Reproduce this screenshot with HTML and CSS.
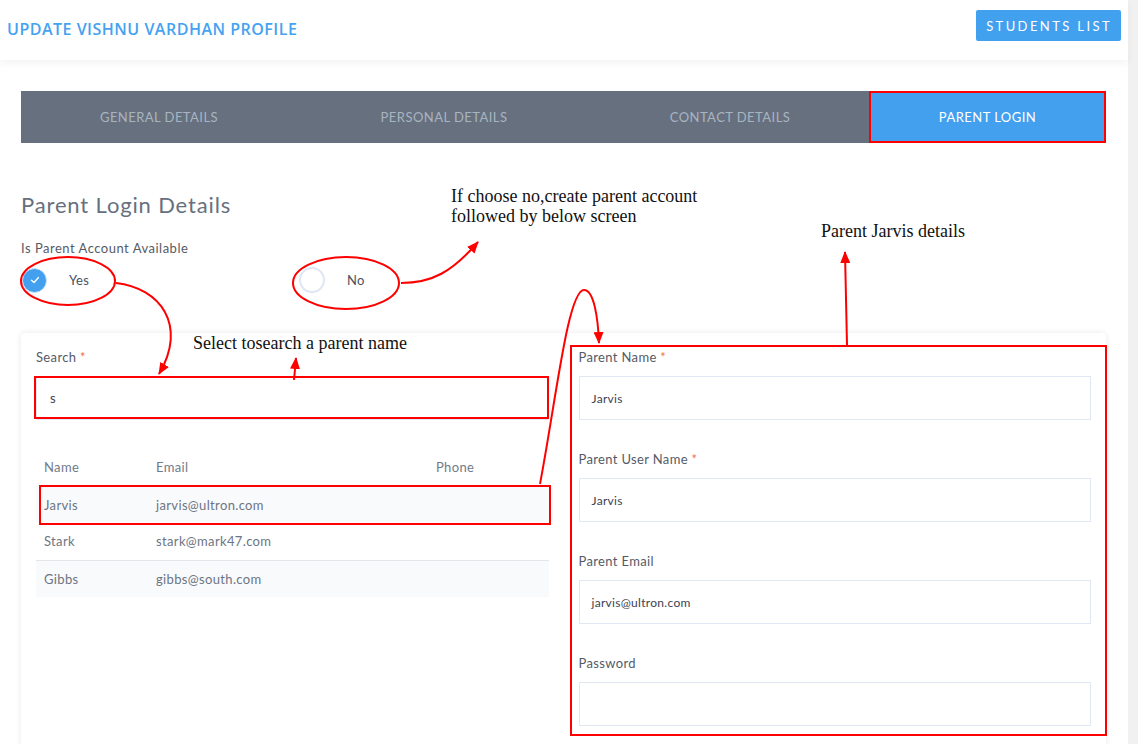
FILE: index.html
```html
<!DOCTYPE html>
<html>
<head>
<meta charset="utf-8">
<link rel="stylesheet" href="styles.css">
</head>
<body>
<div class="page">
  <div class="app">
    <header class="topbar">
      <h1 class="title">UPDATE VISHNU VARDHAN PROFILE</h1>
      <button class="btn">STUDENTS LIST</button>
    </header>
    <main class="content">
      <nav class="tabs">
        <a class="tab">GENERAL DETAILS</a>
        <a class="tab">PERSONAL DETAILS</a>
        <a class="tab">CONTACT DETAILS</a>
        <a class="tab active">PARENT LOGIN</a>
      </nav>
      <h2 class="section-title">Parent Login Details</h2>
      <div class="question">Is Parent Account Available</div>
      <div class="radios">
        <label class="radio radio-yes">
          <span class="dot checked"><svg width="10" height="8" viewBox="0 0 10 8"><path d="M1.5 4.2 L4 6.5 L8.5 1.5" fill="none" stroke="#fff" stroke-width="1.3" stroke-linecap="round" stroke-linejoin="round"/></svg></span>
          <span class="radio-text">Yes</span>
        </label>
        <label class="radio">
          <span class="dot"></span>
          <span class="radio-text">No</span>
        </label>
      </div>
      <section class="card">
        <div class="col">
          <div class="lbl">Search <span class="req">*</span></div>
          <div class="input input-search">s</div>
          <table class="tbl">
            <thead>
              <tr><th class="c-name">Name</th><th class="c-email">Email</th><th>Phone</th></tr>
            </thead>
            <tbody>
              <tr class="shade"><td>Jarvis</td><td>jarvis@ultron.com</td><td></td></tr>
              <tr class="sep"><td>Stark</td><td>stark@mark47.com</td><td></td></tr>
              <tr class="shade"><td>Gibbs</td><td>gibbs@south.com</td><td></td></tr>
            </tbody>
          </table>
        </div>
        <div class="col">
          <div class="group">
            <div class="lbl">Parent Name <span class="req">*</span></div>
            <div class="input">Jarvis</div>
          </div>
          <div class="group">
            <div class="lbl">Parent User Name <span class="req">*</span></div>
            <div class="input">Jarvis</div>
          </div>
          <div class="group">
            <div class="lbl">Parent Email</div>
            <div class="input">jarvis@ultron.com</div>
          </div>
          <div class="group">
            <div class="lbl">Password</div>
            <div class="input"></div>
          </div>
        </div>
      </section>
    </main>
  </div>
  <div class="scrollbar"></div>
</div>

<div class="annot">
  <div class="note note-no">If choose no,create parent account<br>followed by below screen</div>
  <div class="note note-jarvis">Parent Jarvis details</div>
  <div class="note note-search"><span>Select to</span><span>search a parent name</span></div>
  <svg class="annot-svg" width="1138" height="744" viewBox="0 0 1138 744">
    <defs>
      <marker id="ah" markerUnits="userSpaceOnUse" markerWidth="12" markerHeight="10" refX="11" refY="5" orient="auto">
        <path d="M0,0 L12,5 L0,10 Z" fill="#ff0000"/>
      </marker>
    </defs>
    <g fill="none" stroke="#ff0000" stroke-width="2">
      <rect x="870" y="92" width="235" height="50"/>
      <rect x="35" y="377" width="513" height="41"/>
      <rect x="40" y="486" width="510" height="38"/>
      <rect x="571" y="346" width="535" height="389"/>
      <ellipse cx="68" cy="281" rx="47" ry="24"/>
      <ellipse cx="346" cy="283" rx="53" ry="26"/>
      <path d="M116,283 C160,288 188,325 159,374" marker-end="url(#ah)"/>
      <path d="M401,283 C432,283 452,272 478,242" marker-end="url(#ah)"/>
      <path d="M540,484 C556,400 568,290 584,290 C594,290 598,318 599,343" marker-end="url(#ah)"/>
      <path d="M847,345 L845,252" marker-end="url(#ah)"/>
      <path d="M294,380 L296,358" marker-end="url(#ah)"/>
    </g>
  </svg>
</div>
</body>
</html>
```

FILE: styles.css
```css
* { box-sizing: border-box; }
html, body { margin: 0; padding: 0; }
body {
  width: 1138px;
  height: 744px;
  overflow: hidden;
  position: relative;
  font-family: "Lato", "Open Sans", sans-serif;
  background: #fff;
  color: #555b66;
}
.page { display: flex; height: 744px; }
.app { flex: 1; min-width: 0; }
.scrollbar { width: 10px; background: #f1f1f1; }

.topbar {
  height: 60px;
  display: flex;
  justify-content: space-between;
  align-items: flex-start;
  padding: 10px 7px 0 7px;
  background: #fff;
  box-shadow: 0 3px 8px rgba(0,0,0,0.05);
  position: relative;
}
.title {
  margin: 9px 0 0 0;
  font-family: "Open Sans", sans-serif;
  font-weight: 600;
  font-size: 16px;
  line-height: 20px;
  color: #45a2ef;
  letter-spacing: 0.5px;
}
.btn {
  height: 31px;
  border: 0;
  border-radius: 2px;
  background: #42a1ef;
  color: #fff;
  font-family: "Lato", sans-serif;
  font-size: 13px;
  letter-spacing: 2.4px;
  padding: 0 9px 0 10px;
}

.content { padding: 31px 22px 0 21px; }

.tabs {
  display: grid;
  grid-template-columns: 276px 294px 278px 1fr;
  height: 52px;
  background: #67707e;
}
.tab {
  display: flex;
  align-items: center;
  justify-content: center;
  font-size: 13px;
  color: #a7b4c2;
  letter-spacing: 0.45px;
}
.tab.active { background: #42a0ef; color: #fff; }

.section-title {
  margin: 49px 0 0 0;
  font-size: 22px;
  line-height: 26px;
  font-weight: 400;
  color: #67707e;
  letter-spacing: 0.85px;
}
.question {
  margin-top: 22px;
  font-size: 13px;
  line-height: 16px;
  color: #555b66;
  letter-spacing: 0.5px;
}
.radios {
  margin-top: 11px;
  display: flex;
  align-items: center;
  height: 26px;
}
.radio {
  display: flex;
  align-items: center;
  font-size: 13px;
  color: #4a5160;
  letter-spacing: 0.3px;
}
.radio-yes { width: 278px; padding-left: 1px; }
.dot {
  width: 26px;
  height: 26px;
  border-radius: 50%;
  border: 2px solid #dfe7f4;
  background: #fff;
  display: flex;
  align-items: center;
  justify-content: center;
}
.dot.checked {
  width: 25px;
  height: 25px;
  border: 1px solid #d3e4f6;
  background: #42a0ef;
  box-shadow: inset 0 0 0 1px #42a0ef;
}
.radio-text { margin-left: 22px; }

.card {
  margin-top: 40px;
  background: #fff;
  border-radius: 4px;
  box-shadow: 0 0 6px rgba(0,0,0,0.09);
  display: grid;
  grid-template-columns: 1fr 1fr;
  column-gap: 30px;
  padding: 16px 15px 30px 15px;
  height: 420px;
}
.lbl {
  font-size: 13px;
  line-height: 16px;
  color: #555b66;
  letter-spacing: 0.35px;
}
.req { color: #f0714e; }
.input {
  margin-top: 11px;
  height: 44px;
  border: 1px solid #e1e8f4;
  background: #fff;
  display: flex;
  align-items: center;
  padding-left: 12px;
  font-size: 12px;
  color: #3c4250;
  letter-spacing: 0.3px;
}
.input-search { padding-left: 13px; font-size: 13px; }
.group { margin-bottom: 31px; }

.tbl {
  margin-top: 28px;
  width: 100%;
  border-collapse: collapse;
  font-size: 13px;
  letter-spacing: 0.35px;
}
.tbl th {
  text-align: left;
  font-weight: 400;
  color: #717b89;
  height: 38px;
  padding: 0 0 0 8px;
}
.tbl .c-name { width: 112px; }
.tbl .c-email { width: 280px; }
.tbl td {
  height: 37px;
  padding: 0 0 0 8px;
  color: #6c7583;
}
.tbl tr.shade td { background: #f9fafc; }
.tbl tr.sep td { border-bottom: 1px solid #e3e5e9; }

.annot {
  position: absolute;
  left: 0;
  top: 0;
  width: 1138px;
  height: 744px;
  pointer-events: none;
}
.annot-svg { position: absolute; left: 0; top: 0; }
.note {
  position: absolute;
  font-family: "Liberation Serif", serif;
  font-size: 18px;
  line-height: 20px;
  color: #111;
  white-space: nowrap;
}
.note-no { left: 451px; top: 186px; }
.note-jarvis { left: 821px; top: 221px; }
.note-search { left: 193px; top: 333px; }
```
